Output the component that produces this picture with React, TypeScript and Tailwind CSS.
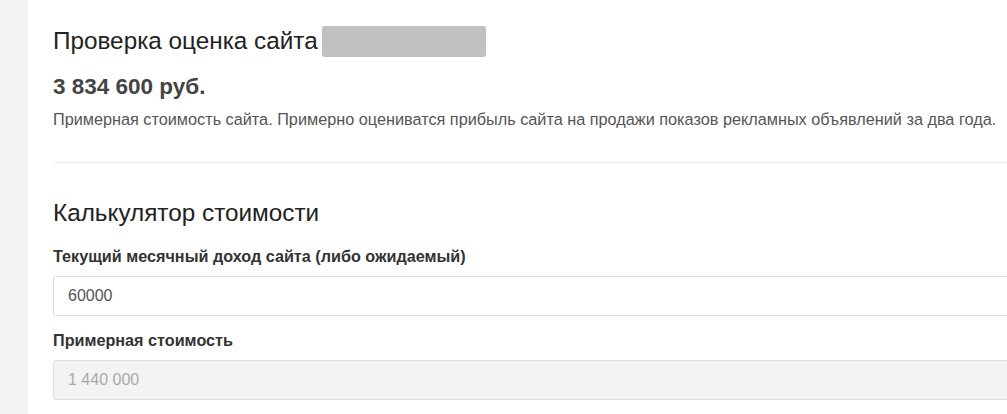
import React, { useState } from 'react';

const App = () => {
  const [income, setIncome] = useState('60000');

  // примерная стоимость = доход * 24
  const value = (parseInt(income, 10) || 0) * 24;
  const formatted = value.toLocaleString('ru-RU').replace(/\u00a0/g, ' ');

  return (
    <div
      className="flex h-[414px] w-[1007px] overflow-hidden bg-[#f1f2f4]"
      style={{ fontFamily: '"Liberation Sans", Arial, sans-serif' }}
    >
      <div className="ml-[28px] flex-1 bg-white pl-[25px] pt-[25px]">
        <div className="w-[1000px]">
          {/* Заголовок */}
          <div className="flex items-center">
            <h1 className="text-[24.3px] leading-[32px] text-[#222]">Проверка оценка сайта</h1>
            <div className="ml-[4px] h-[31px] w-[164px] rounded-[3px] bg-[#c0c0c0]" />
          </div>

          <div className="mt-[17px] text-[22.5px] font-bold leading-[26px] text-[#444]">3 834 600 руб.</div>
          <p className="mt-[8px] text-[16.25px] leading-[22px] text-[#555]">
            Примерная стоимость сайта. Примерно оцениватся прибыль сайта на продажи показов рекламных объявлений за два года.
          </p>

          <div className="mt-[32px] border-t border-[#eeeeee]" />

          {/* Калькулятор */}
          <h2 className="mt-[34px] text-[24.3px] leading-[32px] text-[#222]">Калькулятор стоимости</h2>

          <label className="mt-[16px] block text-[16.2px] font-bold leading-[22px] text-[#333]">
            Текущий месячный доход сайта (либо ожидаемый)
          </label>
          <input
            value={income}
            onChange={(e) => setIncome(e.target.value)}
            className="mt-[9px] block h-[40px] w-full rounded-[3px] border border-[#dddddd] px-[14px] text-[16px] text-[#555] outline-none"
          />

          <label className="mt-[13px] block text-[16.2px] font-bold leading-[22px] text-[#333]">
            Примерная стоимость
          </label>
          <input
            value={formatted}
            disabled
            readOnly
            className="mt-[9px] block h-[40px] w-full rounded-[3px] border border-[#dddddd] bg-[#f3f3f3] px-[14px] text-[16px] text-[#aaaaaa] outline-none"
          />
        </div>
      </div>
    </div>
  );
};

export default App;
